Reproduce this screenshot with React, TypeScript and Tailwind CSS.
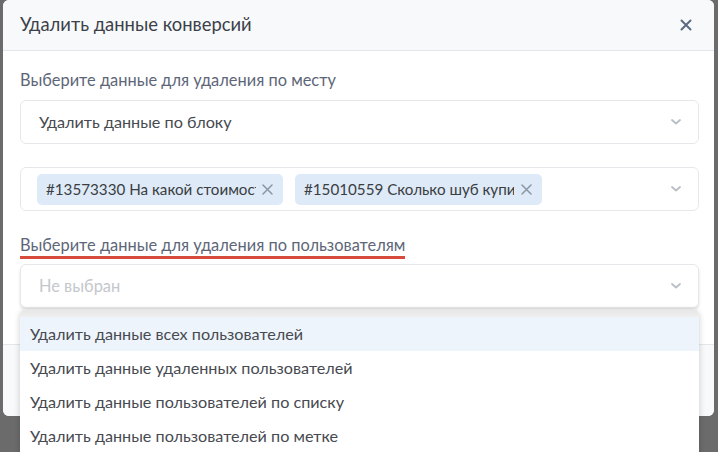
import React from "react";

const Chevron = () => (
  <svg width="12" height="8" viewBox="0 0 12 8" fill="none">
    <path d="M2 2l4 3.5L10 2" stroke="#b9bec6" strokeWidth="1.8" strokeLinecap="round" strokeLinejoin="round" />
  </svg>
);

const TagX = () => (
  <svg width="11" height="11" viewBox="0 0 11 11" fill="none">
    <path d="M1 1l9 9M10 1l-9 9" stroke="#8b96a5" strokeWidth="1.5" strokeLinecap="round" />
  </svg>
);

export default function App() {
  const font = { fontFamily: "Lato, 'Open Sans', 'Noto Sans', sans-serif" };
  return (
    <div className="relative w-[718px] h-[452px] overflow-hidden bg-[#6b6b6b]" style={font}>
      <div className="ml-[3px] w-[711px] rounded-md bg-white overflow-hidden">
        <div className="h-[51px] flex items-center justify-between pl-[17px] pr-[22px] bg-[#f8f9fb] border-b border-[#e3e6ea]">
          <span className="text-[18.4px] text-[#3b4049]">Удалить данные конверсий</span>
          <svg width="12" height="12" viewBox="0 0 12 12" fill="none">
            <path d="M1.5 1.5l9 9M10.5 1.5l-9 9" stroke="#5c6b80" strokeWidth="2" strokeLinecap="round" />
          </svg>
        </div>
        <div className="pl-[17px] pr-[15px] pt-[19px] pb-[36px]">
          <div className="text-[16.4px] leading-[20px] text-[#5d6678]">Выберите данные для удаления по месту</div>
          <div className="mt-[10px] h-[44px] flex items-center justify-between pl-[18px] pr-[16px] rounded-md border border-[#e5e7eb] bg-white">
            <span className="text-[16.2px] text-[#474a50]">Удалить данные по блоку</span>
            <Chevron />
          </div>
          <div className="mt-[23px] h-[44px] flex items-center justify-between pl-[16px] pr-[16px] rounded-md border border-[#e5e7eb] bg-white">
            <div className="flex gap-[12px]">
              <div className="h-[31px] w-[246px] flex items-center justify-between pl-[9px] pr-[10px] rounded-[5px] bg-[#deeaf7]">
                <span className="text-[15.2px] text-[#3a3d42] whitespace-nowrap overflow-hidden w-[210px]">#13573330 На какой стоимости</span>
                <TagX />
              </div>
              <div className="h-[31px] w-[247px] flex items-center justify-between pl-[9px] pr-[10px] rounded-[5px] bg-[#deeaf7]">
                <span className="text-[15.2px] text-[#3a3d42] whitespace-nowrap overflow-hidden w-[210px]">#15010559 Сколько шуб купить</span>
                <TagX />
              </div>
            </div>
            <Chevron />
          </div>
          <div className="mt-[24px] inline-block text-[16.4px] leading-[20px] text-[#5d6678] border-b-[3px] border-[#d84a3c] pb-[1px]">
            Выберите данные для удаления по пользователям
          </div>
          <div className="mt-[5px] h-[44px] flex items-center justify-between pl-[18px] pr-[16px] rounded-md border border-[#e5e7eb] bg-white shadow-[0_2px_3px_rgba(0,0,0,0.12)]">
            <span className="text-[16.4px] text-[#c4c7cc]">Не выбран</span>
            <Chevron />
          </div>
        </div>
        <div className="h-[72px] bg-[#f8f9fb] border-t border-[#e3e6ea]"></div>
      </div>
      <div className="absolute left-[20px] top-[309px] w-[679px] h-[160px] rounded-md bg-white shadow-[0_2px_6px_rgba(0,0,0,0.2)] overflow-hidden">
        <div className="h-[8px] bg-gradient-to-b from-[#e6e6e6] to-[#efefef]"></div>
        {[
          "Удалить данные всех пользователей",
          "Удалить данные удаленных пользователей",
          "Удалить данные пользователей по списку",
          "Удалить данные пользователей по метке",
        ].map((t, i) => (
          <div key={t} className={`h-[34px] flex items-center pl-[10px] text-[16.2px] text-[#474a50] ${i === 0 ? "bg-[#eef4fc]" : "bg-white"}`}>
            {t}
          </div>
        ))}
      </div>
    </div>
  );
}
